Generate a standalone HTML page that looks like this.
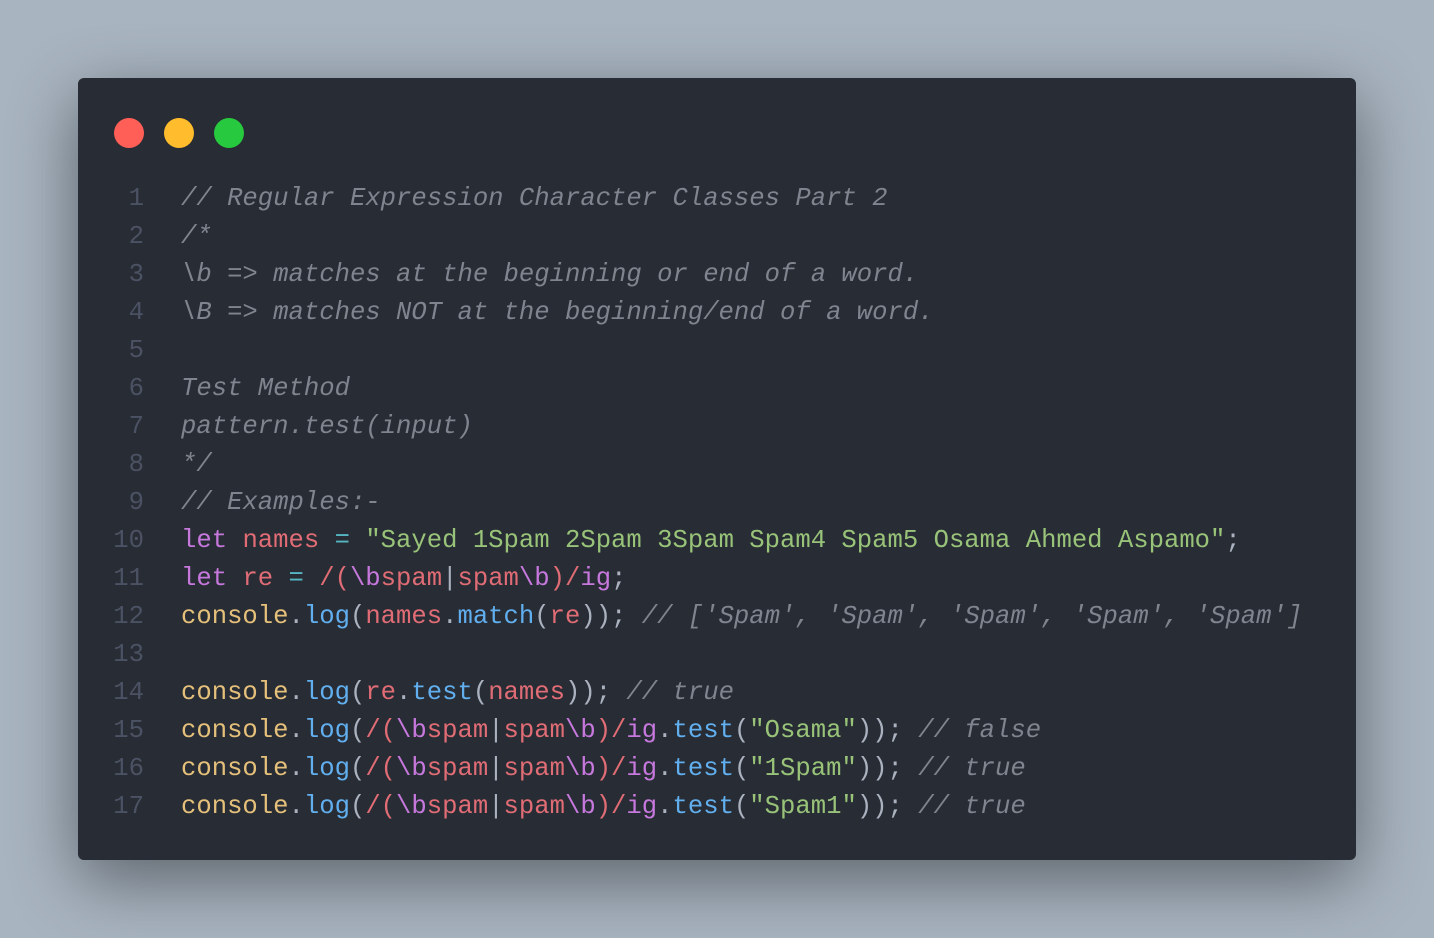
<!DOCTYPE html>
<html><head><meta charset="utf-8"><style>
html,body{margin:0;width:1434px;height:938px;overflow:hidden;background:#a8b4c0;}
.win{position:absolute;left:78px;top:78px;width:1278px;height:782px;background:#282c34;border-radius:6px;box-shadow:0 20px 68px rgba(0,0,0,0.45);}
.dot{position:absolute;top:40px;width:30px;height:30px;border-radius:50%;}
pre{position:absolute;left:0;top:102px;margin:0;font-family:"Liberation Mono",monospace;font-size:25.6px;line-height:38px;color:#abb2bf;}
.n{display:inline-block;width:66px;text-align:right;color:#4b5263;margin-right:37px;}
.c{color:#7f848e;font-style:italic}
.k{color:#c678dd}.v{color:#e06c75}.o{color:#56b6c2}.s{color:#98c379}.y{color:#e5c07b}.f{color:#61afef}
</style></head><body>
<div class="win">
<div class="dot" style="left:36px;background:#ff5f56"></div>
<div class="dot" style="left:86px;background:#ffbd2e"></div>
<div class="dot" style="left:136px;background:#27c93f"></div>
<pre><span class="n">1</span><span class="c">// Regular Expression Character Classes Part 2</span>
<span class="n">2</span><span class="c">/*</span>
<span class="n">3</span><span class="c">\b =&gt; matches at the beginning or end of a word.</span>
<span class="n">4</span><span class="c">\B =&gt; matches NOT at the beginning/end of a word.</span>
<span class="n">5</span>
<span class="n">6</span><span class="c">Test Method</span>
<span class="n">7</span><span class="c">pattern.test(input)</span>
<span class="n">8</span><span class="c">*/</span>
<span class="n">9</span><span class="c">// Examples:-</span>
<span class="n">10</span><span class="k">let</span> <span class="v">names</span> <span class="o">=</span> <span class="s">"Sayed 1Spam 2Spam 3Spam Spam4 Spam5 Osama Ahmed Aspamo"</span>;
<span class="n">11</span><span class="k">let</span> <span class="v">re</span> <span class="o">=</span> <span class="v">/(</span><span class="k">\b</span><span class="v">spam</span>|<span class="v">spam</span><span class="k">\b</span><span class="v">)/</span><span class="k">ig</span>;
<span class="n">12</span><span class="y">console</span>.<span class="f">log</span>(<span class="v">names</span>.<span class="f">match</span>(<span class="v">re</span>)); <span class="c">// ['Spam', 'Spam', 'Spam', 'Spam', 'Spam']</span>
<span class="n">13</span>
<span class="n">14</span><span class="y">console</span>.<span class="f">log</span>(<span class="v">re</span>.<span class="f">test</span>(<span class="v">names</span>)); <span class="c">// true</span>
<span class="n">15</span><span class="y">console</span>.<span class="f">log</span>(<span class="v">/(</span><span class="k">\b</span><span class="v">spam</span>|<span class="v">spam</span><span class="k">\b</span><span class="v">)/</span><span class="k">ig</span>.<span class="f">test</span>(<span class="s">"Osama"</span>)); <span class="c">// false</span>
<span class="n">16</span><span class="y">console</span>.<span class="f">log</span>(<span class="v">/(</span><span class="k">\b</span><span class="v">spam</span>|<span class="v">spam</span><span class="k">\b</span><span class="v">)/</span><span class="k">ig</span>.<span class="f">test</span>(<span class="s">"1Spam"</span>)); <span class="c">// true</span>
<span class="n">17</span><span class="y">console</span>.<span class="f">log</span>(<span class="v">/(</span><span class="k">\b</span><span class="v">spam</span>|<span class="v">spam</span><span class="k">\b</span><span class="v">)/</span><span class="k">ig</span>.<span class="f">test</span>(<span class="s">"Spam1"</span>)); <span class="c">// true</span></pre>
</div>
</body></html>
